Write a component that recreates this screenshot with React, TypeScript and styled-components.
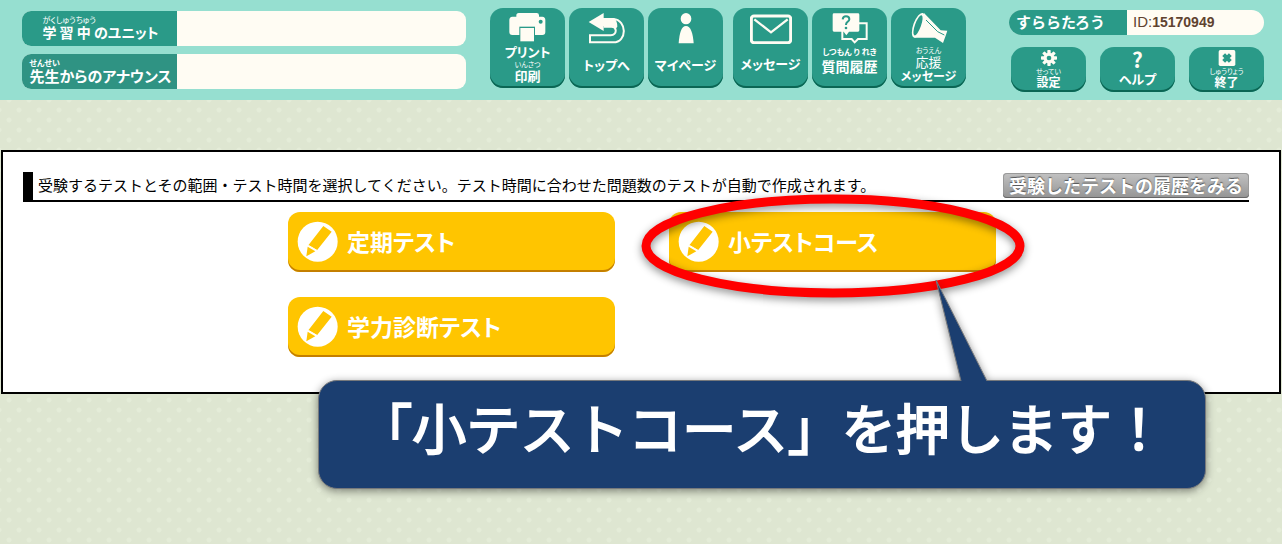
import React from "react";
import styled, { createGlobalStyle } from "styled-components";

const green = "#2a9a88";
const cream = "#fffcf3";
const jp = `"Noto Sans CJK JP", sans-serif`;

const GlobalStyle = createGlobalStyle`
  * { box-sizing: border-box; }
  body {
    margin: 0;
    font-family: ${jp};
    background-color: #dee6d1;
    background-image:
      radial-gradient(circle at 9px 10px, #e4ecd8 2px, transparent 3px),
      radial-gradient(circle at 9px 10px, #e4ecd8 2px, transparent 3px);
    background-size: 20px 20px;
    background-position: 0 10px, 10px 0;
  }
  button, input { font-family: inherit; border: 0; margin: 0; padding: 0; }
  button { cursor: pointer; }
  svg { display: block; flex: none; }
`;

const Page = styled.div`
  display: flow-root;
  min-height: 100vh;
`;

const Header = styled.header`
  display: flex;
  align-items: flex-start;
  height: 100px;
  padding: 8px 18px 8px 22px;
  background: #96dfd0;
`;

const Fields = styled.div`
  flex: 1;
  min-width: 240px;
  display: flex;
  flex-direction: column;
  gap: 8px;
  padding-top: 3px;
`;

const FieldRow = styled.div`
  display: flex;
  height: 35px;
  border-radius: 9px;
  overflow: hidden;
  background: ${cream};
`;

const FieldLabel = styled.label<{ $tone: string }>`
  width: 155px;
  flex: none;
  display: flex;
  flex-direction: column;
  align-items: center;
  padding: 3px 0 0 2px;
  color: #fff;
  background: ${(p) => p.$tone};
`;

const FieldInner = styled.span`
  display: flex;
  flex-direction: column;
  align-items: flex-start;
`;

const FieldValue = styled.input`
  flex: 1;
  min-width: 0;
  padding: 0 8px;
  background: transparent;
  outline: none;
`;

const Line = styled.span<{ $size: number; $lh: number; $light?: boolean }>`
  display: block;
  white-space: pre;
  font-size: ${(p) => p.$size}px;
  line-height: ${(p) => p.$lh}px;
  font-weight: ${(p) => (p.$light ? 400 : 700)};
  font-feature-settings: "palt";
`;

const Nav = styled.nav`
  display: flex;
  gap: 10px;
  margin: 0 43px 0 24px;
`;

const NavGroup = styled.div`
  display: flex;
  gap: 4px;
`;

const Tile = styled.button`
  width: 75px;
  height: 80px;
  display: flex;
  flex-direction: column;
  align-items: center;
  color: #fff;
  background: ${green};
  border-radius: 13px;
  box-shadow: inset 0 -2px 0 #0b6654;
`;

const TileIcon = styled.span`
  height: 37px;
  padding-top: 4px;
`;

const Account = styled.div`
  width: 255px;
  flex: none;
  padding-top: 2px;
`;

const IdPill = styled.div`
  display: flex;
  height: 25px;
  border-radius: 13px;
  overflow: hidden;
  background: ${cream};
`;

const UserName = styled.span`
  width: 118px;
  padding-left: 7px;
  font-size: 15px;
  font-weight: 700;
  line-height: 24px;
  color: #fff;
  background: ${green};
`;

const UserId = styled.span`
  padding-left: 6px;
  font: 400 15px/24px "Liberation Sans", sans-serif;
  color: #5f4330;
  b { font-size: 14px; }
`;

const AccountButtons = styled.div`
  display: flex;
  gap: 14px;
  padding: 12px 0 0 2px;
`;

const SmallButton = styled(Tile)`
  height: 45px;
  padding-top: 2px;
  border-radius: 14px;
`;

const HelpMark = styled.span`
  font-size: 21px;
  line-height: 20px;
  font-weight: 700;
  color: ${cream};
`;

const Panel = styled.main`
  margin: 50px 1px;
  padding: 20px 20px 35px;
  border: 2px solid #000;
  background: #fff;
`;

const PanelHead = styled.div`
  display: flex;
  justify-content: space-between;
  align-items: flex-start;
  height: 30px;
  margin-right: 10px;
  padding-left: 5px;
  border-left: 10px solid #000;
  border-bottom: 2px solid #000;
`;

const Instruction = styled.h1`
  margin: 0;
  font-size: 15px;
  font-weight: 400;
  line-height: 26px;
  white-space: nowrap;
`;

const HistoryButton = styled.button`
  height: 25px;
  margin-top: 1px;
  padding: 0 6px;
  border-radius: 4px;
  background: linear-gradient(#c2c2c2, #949494);
  box-shadow: inset 0 -1px 0 #666, inset 0 0 0 1px #9a9a9a;
  color: #fff;
  font-size: 18px;
  font-weight: 700;
  line-height: 25px;
  white-space: nowrap;
  text-shadow: 0 -1px 1px #555;
`;

const Choices = styled.div`
  display: grid;
  grid-template-columns: 327px 327px;
  justify-content: center;
  gap: 25px 54px;
  margin: 10px 0 0 2px;
`;

const Choice = styled.div`
  position: relative;
`;

const CourseButton = styled.button`
  width: 100%;
  height: 60px;
  display: flex;
  align-items: center;
  gap: 9px;
  padding: 0 9px 2px;
  border-radius: 12px;
  background: #ffc500;
  box-shadow: inset 0 -2px 0 #c47f00;
  color: #fff;
  font-size: 23px;
  font-weight: 700;
  font-feature-settings: "palt";
`;

const Ring = styled.svg`
  position: absolute;
  left: -38px;
  top: -28px;
  overflow: visible;
  pointer-events: none;
  filter: drop-shadow(0 3px 4px rgba(0, 0, 0, 0.45));
`;

const Callout = styled.div`
  position: absolute;
  left: -351px;
  top: 168px;
  width: 888px;
  height: 109px;
  padding-bottom: 16px;
  display: flex;
  align-items: center;
  justify-content: center;
  border: 1px solid #77797c;
  border-radius: 19px;
  background: #1b3e70;
  color: #fff;
  font-size: 54px;
  line-height: 80px;
  white-space: nowrap;
  -webkit-text-stroke: 2px #fff;
  stroke-linejoin: round;
  filter: drop-shadow(0 2px 4px rgba(0, 0, 0, 0.45));
`;

const Tail = styled.svg`
  position: absolute;
  left: 610px;
  top: -103px;
`;

const PrintIcon = () => (
  <svg width="39" height="31" viewBox="85 38 117 93" fill={cream}>
    <path d="M110 52V46Q111 41 117 41H171Q178 41 178 48V52H188Q197 53 197 62V98Q197 107 188 107H98Q89 107 89 98V62Q89 53 98 52Z" />
    <circle cx="183" cy="67" r="6" fill={green} />
    <path d="M119 82H166V126H119Z" fill={green} />
    <path d="M122 86H163V126H122Z" />
  </svg>
);

const BackIcon = () => (
  <svg width="38" height="32" viewBox="324 38 114 96">
    <path d="M326 68L371 41V56H402Q412 64 412 82L404 92Q404 80 392 80H371V95Z" fill={cream} />
    <path d="M371 59H400C442 62 442 129 400 129H330V108H392C412 106 412 82 394 82H371" fill="none" stroke={cream} strokeWidth="6" />
  </svg>
);

const PersonIcon = () => (
  <svg width="18" height="32" viewBox="592 38 54 96" fill={cream}>
    <ellipse cx="619" cy="58" rx="16" ry="17" />
    <path d="M597 132C599 102 605 80 619 80S640 102 642 132Z" />
  </svg>
);

const MailIcon = () => (
  <svg width="42" height="32" viewBox="78 40 126 96" fill="none" stroke={cream} strokeWidth="9">
    <rect x="82" y="52" width="118" height="80" rx="8" />
    <path d="M91 62L141 101L191 62" strokeWidth="7" />
  </svg>
);

const TalkIcon = () => (
  <svg width="36" height="32" viewBox="322 38 108 96">
    <path d="M353 72H426V119H400L390 129L381 119H353Z" fill="none" stroke={cream} strokeWidth="6" />
    <path d="M328 42H400Q404 42 404 46V93Q404 97 400 97H373L365 108L357 97H328Q324 97 324 93V46Q324 42 328 42Z" fill={cream} />
    <path d="M354 60Q355 51 364 51Q374 51 374 60Q374 65 368 68Q364 71 364 77" fill="none" stroke={green} strokeWidth="6" />
    <circle cx="364" cy="86" r="4" fill={green} />
  </svg>
);

const HornIcon = () => (
  <svg width="38" height="32" viewBox="557 36 114 96">
    <path d="M570 113L599 39L649 91L669 92L665 104L656 129L632 113Z" fill={cream} />
    <ellipse cx="582" cy="76" rx="15" ry="39" transform="rotate(20 582 76)" fill={cream} />
    <ellipse cx="581" cy="76" rx="9" ry="32" transform="rotate(20 581 76)" fill={green} />
    <path d="M605 60L640 95L660 105" fill="none" stroke={green} strokeWidth="3" />
  </svg>
);

const GearIcon = () => (
  <svg width="18" height="18" viewBox="-27 -27 54 54" fill={cream}>
    {[0, 45, 90, 135].map((angle) => (
      <rect key={angle} x="-5" y="-24" width="10" height="48" rx="2" transform={`rotate(${angle})`} />
    ))}
    <circle r="16" />
    <circle r="7" fill={green} />
  </svg>
);

const CloseIcon = () => (
  <svg width="18" height="18" viewBox="0 0 54 54">
    <rect x="2" y="3" width="50" height="48" rx="5" fill={cream} />
    <path d="M17 17L37 37M37 17L17 37" stroke={green} strokeWidth="12" />
  </svg>
);

const PencilIcon = () => (
  <svg width="41" height="41" viewBox="52 65 123 123">
    <circle cx="114" cy="127" r="60" fill="#fff" />
    <path d="M131 80L156 97L112 153L86 138ZM84 142L107 156L80 171Z" fill="#ffc500" />
    <path d="M86 138L112 153" fill="none" stroke="#fff" strokeWidth="3" />
  </svg>
);

type Text = [string, number, number, boolean?];

const Lines = ({ lines }: { lines: Text[] }) => (
  <>
    {lines.map(([text, size, lh, light]) => (
      <Line key={text} $size={size} $lh={lh} $light={light}>{text}</Line>
    ))}
  </>
);

const tiles: { icon: React.ReactNode; lines: Text[] }[][] = [
  [
    { icon: <PrintIcon />, lines: [["プリント", 13, 14], ["いんさつ", 7, 10, true], ["印刷", 13, 14]] },
    { icon: <BackIcon />, lines: [["トップへ", 13, 40]] },
    { icon: <PersonIcon />, lines: [["マイページ", 13, 40]] },
  ],
  [
    { icon: <MailIcon />, lines: [["メッセージ", 13, 38]] },
    { icon: <TalkIcon />, lines: [["しつもん り れき", 8, 14], ["質問履歴", 14, 15]] },
    { icon: <HornIcon />, lines: [["おうえん", 7, 10, true], ["応援", 13, 14, true], ["メッセージ", 12, 14]] },
  ],
];

export default function App() {
  return (
    <Page>
      <GlobalStyle />
      <Header>
        <Fields>
          <FieldRow>
            <FieldLabel htmlFor="unit" $tone={green}>
              <FieldInner>
                <Lines lines={[["がくしゅうちゅう", 8, 11, true], ["学 習 中 のユニット", 14, 15]]} />
              </FieldInner>
            </FieldLabel>
            <FieldValue id="unit" readOnly />
          </FieldRow>
          <FieldRow>
            <FieldLabel htmlFor="announce" $tone="#2f9383">
              <FieldInner>
                <Lines lines={[["せんせい", 8, 11], ["先生からのアナウンス", 15, 15]]} />
              </FieldInner>
            </FieldLabel>
            <FieldValue id="announce" readOnly />
          </FieldRow>
        </Fields>
        <Nav>
          {tiles.map((group, i) => (
            <NavGroup key={i}>
              {group.map((tile, j) => (
                <Tile key={j} type="button">
                  <TileIcon>{tile.icon}</TileIcon>
                  <Lines lines={tile.lines} />
                </Tile>
              ))}
            </NavGroup>
          ))}
        </Nav>
        <Account>
          <IdPill>
            <UserName>すららたろう</UserName>
            <UserId>ID:<b>15170949</b></UserId>
          </IdPill>
          <AccountButtons>
            <SmallButton type="button">
              <GearIcon />
              <Lines lines={[["せってい", 7, 8, true], ["設定", 12, 14]]} />
            </SmallButton>
            <SmallButton type="button">
              <HelpMark>?</HelpMark>
              <Lines lines={[["ヘルプ", 13, 20]]} />
            </SmallButton>
            <SmallButton type="button">
              <CloseIcon />
              <Lines lines={[["しゅうりょう", 7, 8, true], ["終了", 12, 14]]} />
            </SmallButton>
          </AccountButtons>
        </Account>
      </Header>
      <Panel>
        <PanelHead>
          <Instruction>
            受験するテストとその範囲・テスト時間を選択してください。テスト時間に合わせた問題数のテストが自動で作成されます。
          </Instruction>
          <HistoryButton type="button">受験したテストの履歴をみる</HistoryButton>
        </PanelHead>
        <Choices>
          <Choice>
            <CourseButton type="button"><PencilIcon />定期テスト</CourseButton>
          </Choice>
          <Choice>
            <CourseButton type="button"><PencilIcon />小テストコース</CourseButton>
            <Ring width="404" height="124" viewBox="0 0 404 124">
              <ellipse cx="202" cy="62" rx="187" ry="47" fill="none" stroke="#f00" strokeWidth="9" />
            </Ring>
            <Callout>
              <Tail width="64" height="104" viewBox="0 0 64 104">
                <path d="M32 103L7 2L58 103Z" fill="#1b3e70" />
                <path d="M32 103L7 2L58 103" fill="none" stroke="#77797c" />
              </Tail>
              「小テストコース」を押します！
            </Callout>
          </Choice>
          <Choice>
            <CourseButton type="button"><PencilIcon />学力診断テスト</CourseButton>
          </Choice>
        </Choices>
      </Panel>
    </Page>
  );
}
